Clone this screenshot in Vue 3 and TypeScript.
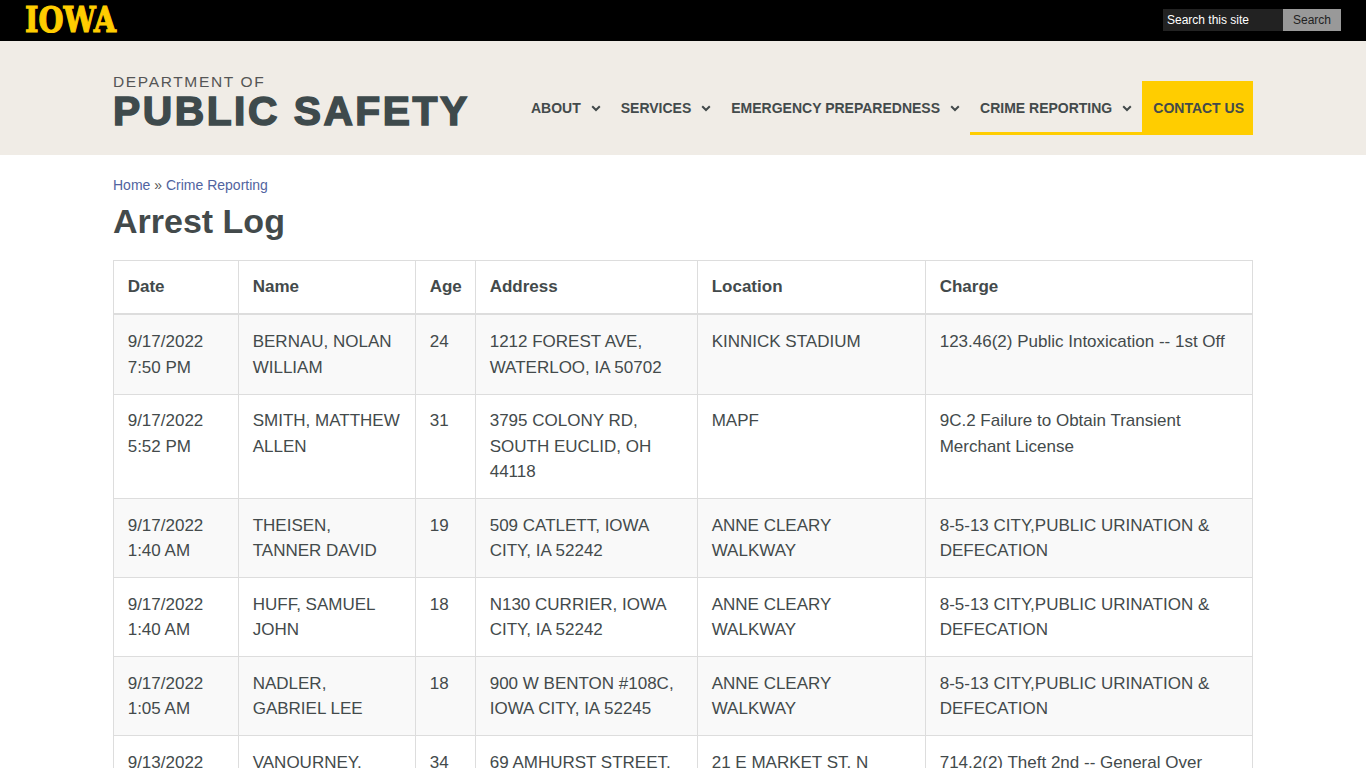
<script setup lang="ts">
interface Arrest {
  date: string
  time: string
  name: string
  age: number
  address: string
  location: string
  charge: string
}

const navItems = ['About', 'Services', 'Emergency Preparedness', 'Crime Reporting']

const arrests: Arrest[] = [
  { date: '9/17/2022', time: '7:50 PM', name: 'BERNAU, NOLAN WILLIAM', age: 24, address: '1212 FOREST AVE, WATERLOO, IA 50702', location: 'KINNICK STADIUM', charge: '123.46(2) Public Intoxication -- 1st Off' },
  { date: '9/17/2022', time: '5:52 PM', name: 'SMITH, MATTHEW ALLEN', age: 31, address: '3795 COLONY RD, SOUTH EUCLID, OH 44118', location: 'MAPF', charge: '9C.2 Failure to Obtain Transient Merchant License' },
  { date: '9/17/2022', time: '1:40 AM', name: 'THEISEN, TANNER DAVID', age: 19, address: '509 CATLETT, IOWA CITY, IA 52242', location: 'ANNE CLEARY WALKWAY', charge: '8-5-13 CITY,PUBLIC URINATION & DEFECATION' },
  { date: '9/17/2022', time: '1:40 AM', name: 'HUFF, SAMUEL JOHN', age: 18, address: 'N130 CURRIER, IOWA CITY, IA 52242', location: 'ANNE CLEARY WALKWAY', charge: '8-5-13 CITY,PUBLIC URINATION & DEFECATION' },
  { date: '9/17/2022', time: '1:05 AM', name: 'NADLER, GABRIEL LEE', age: 18, address: '900 W BENTON #108C, IOWA CITY, IA 52245', location: 'ANNE CLEARY WALKWAY', charge: '8-5-13 CITY,PUBLIC URINATION & DEFECATION' },
  { date: '9/13/2022', time: '', name: 'VANOURNEY,', age: 34, address: '69 AMHURST STREET,', location: '21 E MARKET ST. N', charge: '714.2(2) Theft 2nd -- General Over' },
]
</script>

<template>
  <div class="page">
    <div class="topbar">
      <span class="iowa">IOWA</span>
      <form class="search" @submit.prevent>
        <span class="search-input">Search this site</span>
        <button class="search-btn" type="submit">Search</button>
      </form>
    </div>

    <header class="site-header">
      <div class="container header-row">
        <a class="brand">
          <span class="brand-small">DEPARTMENT OF</span>
          <span class="brand-big">PUBLIC SAFETY</span>
        </a>
        <nav class="nav">
          <a
            v-for="item in navItems"
            :key="item"
            class="nav-item"
            :class="{ active: item === 'Crime Reporting' }"
          >
            {{ item }}
            <svg class="chevron" viewBox="0 0 10 7" width="10" height="7">
              <path d="M1.2 1.2 5 5 8.8 1.2" fill="none" stroke="currentColor" stroke-width="2" />
            </svg>
          </a>
          <a class="nav-contact">Contact Us</a>
        </nav>
      </div>
    </header>

    <main class="container content">
      <div class="breadcrumb"><a>Home</a> » <a>Crime Reporting</a></div>
      <h1>Arrest Log</h1>
      <table class="log">
        <colgroup>
          <col style="width: 125px">
          <col style="width: 177px">
          <col style="width: 60px">
          <col style="width: 222px">
          <col style="width: 228px">
          <col>
        </colgroup>
        <thead>
          <tr>
            <th>Date</th>
            <th>Name</th>
            <th>Age</th>
            <th>Address</th>
            <th>Location</th>
            <th>Charge</th>
          </tr>
        </thead>
        <tbody>
          <tr v-for="(row, i) in arrests" :key="i">
            <td>{{ row.date }}<br>{{ row.time }}</td>
            <td>{{ row.name }}</td>
            <td>{{ row.age }}</td>
            <td>{{ row.address }}</td>
            <td>{{ row.location }}</td>
            <td>{{ row.charge }}</td>
          </tr>
        </tbody>
      </table>
    </main>
  </div>
</template>

<style scoped>
.page {
  height: 768px;
  overflow: hidden;
  font-family: "Liberation Sans", Arial, sans-serif;
  color: #434a4b;
  background: #fff;
}

.topbar {
  height: 41px;
  background: #000;
  display: flex;
  align-items: center;
  justify-content: space-between;
  padding: 0 25px;
  box-sizing: border-box;
}

.iowa {
  display: block;
  width: 92px;
  font-family: "DejaVu Serif", serif;
  font-weight: 700;
  font-size: 35px;
  line-height: 39px;
  height: 41px;
  color: #ffcd00;
  -webkit-text-stroke: 1.2px #ffcd00;
  transform: scaleX(0.82);
  transform-origin: left center;
  white-space: nowrap;
}

.search {
  display: flex;
  height: 22px;
  margin-top: -2px;
}

.search-input {
  width: 120px;
  box-sizing: border-box;
  padding-left: 4px;
  background: #222;
  color: #fff;
  font-size: 12px;
  line-height: 22px;
}

.search-btn {
  width: 58px;
  border: 0;
  padding: 0;
  background: #999;
  color: #222;
  font-family: inherit;
  font-size: 12px;
}

.site-header {
  height: 114px;
  background: #f0ece6;
}

.container {
  width: 1140px;
  margin: 0 auto;
}

.header-row {
  display: flex;
  justify-content: space-between;
  align-items: flex-start;
  padding-top: 40px;
}

.brand {
  display: block;
}

.brand-small {
  display: block;
  margin-top: -7px;
  font-size: 15.5px;
  line-height: 16px;
  letter-spacing: 1.65px;
  color: #555;
}

.brand-big {
  display: block;
  margin-top: 4px;
  font-size: 40px;
  line-height: 34px;
  font-weight: 700;
  letter-spacing: 2.45px;
  color: #3e4a4c;
  -webkit-text-stroke: 1.5px #3e4a4c;
  white-space: nowrap;
  transform: scaleX(1.02);
  transform-origin: left center;
}

.nav {
  display: flex;
  align-items: stretch;
  height: 54px;
}

.nav-item,
.nav-contact {
  display: flex;
  align-items: center;
  font-size: 14px;
  font-weight: 700;
  text-transform: uppercase;
  white-space: nowrap;
  padding: 0 10px;
  box-sizing: border-box;
}

.nav-item {
  border-bottom: 3px solid transparent;
  padding-top: 3px;
}

.nav-item.active {
  border-bottom-color: #ffcd00;
}

.chevron {
  margin-left: 10px;
}

.nav-contact {
  background: #ffcd00;
  padding: 0 9px 0 11px;
}

.content {
  padding-top: 22px;
}

.breadcrumb {
  font-size: 14px;
  line-height: 16px;
  color: #555;
}

.breadcrumb a {
  color: #5164a0;
}

h1 {
  margin: 8px 0 19px;
  font-size: 34px;
  line-height: 40px;
  font-weight: 700;
}

.log {
  width: 100%;
  table-layout: fixed;
  border-collapse: collapse;
  font-size: 17px;
  line-height: 25.5px;
}

.log th,
.log td {
  border: 1px solid #ddd;
  padding: 13.55px 13.7px;
  text-align: left;
  vertical-align: top;
}

.log th {
  padding: 12.6px 13.7px 14.4px;
  font-weight: 700;
  border-bottom-width: 2px;
}

.log tbody tr:nth-child(odd) {
  background: #f9f9f9;
}
</style>

<style>
html,
body {
  margin: 0;
  overflow: hidden;
}
</style>
